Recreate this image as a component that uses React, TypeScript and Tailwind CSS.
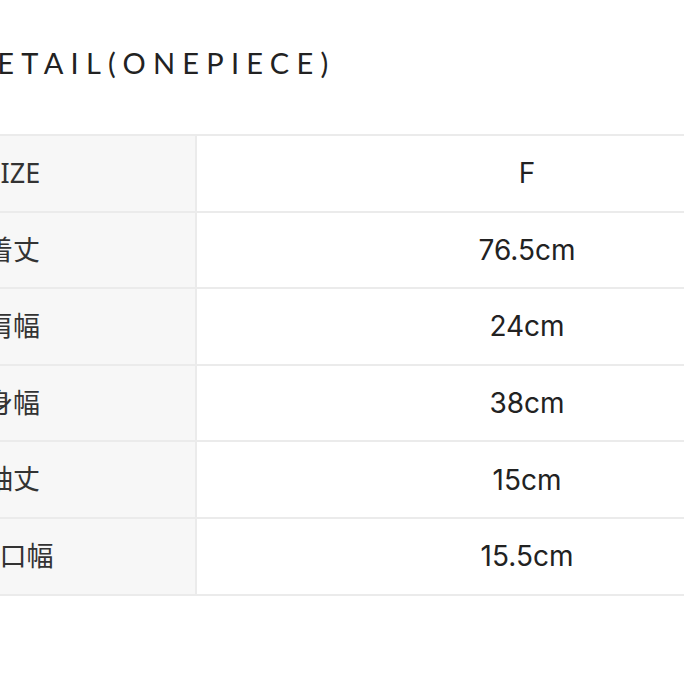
const rows = [
  { label: "SIZE", value: "F" },
  { label: "着丈", value: "76.5cm" },
  { label: "肩幅", value: "24cm" },
  { label: "身幅", value: "38cm" },
  { label: "袖丈", value: "15cm" },
  { label: "袖口幅", value: "15.5cm" },
];

const App = () => {
  return (
    <div className="w-[684px] h-[684px] bg-white overflow-hidden">
      <div className="ml-[-171px] w-[1030px] pt-[43px]">
        <h1
          className="pl-[139px] text-[29px] leading-[40px] font-normal tracking-[0.25em] text-[#222]"
          style={{ fontFamily: "Lato, 'Liberation Sans', sans-serif" }}
        >
          DETAIL(ONEPIECE)
        </h1>

        <table className="mt-[51px] w-full border-collapse">
          <tbody>
            {rows.map((row) => (
              <tr key={row.label} className="h-[76.6px]">
                <td
                  className="w-[366px] border-2 border-[#ebebeb] bg-[#f7f7f7] text-center text-[27px] text-[#333]"
                  style={{ fontFamily: "'Noto Sans', 'Noto Sans CJK JP', sans-serif" }}
                >
                  {row.label}
                </td>
                <td
                  className="border-2 border-[#ebebeb] text-center text-[28px] text-[#222]"
                  style={{ fontFamily: "Inter, 'Liberation Sans', sans-serif" }}
                >
                  {row.value}
                </td>
              </tr>
            ))}
          </tbody>
        </table>
      </div>
    </div>
  );
};

export default App;
